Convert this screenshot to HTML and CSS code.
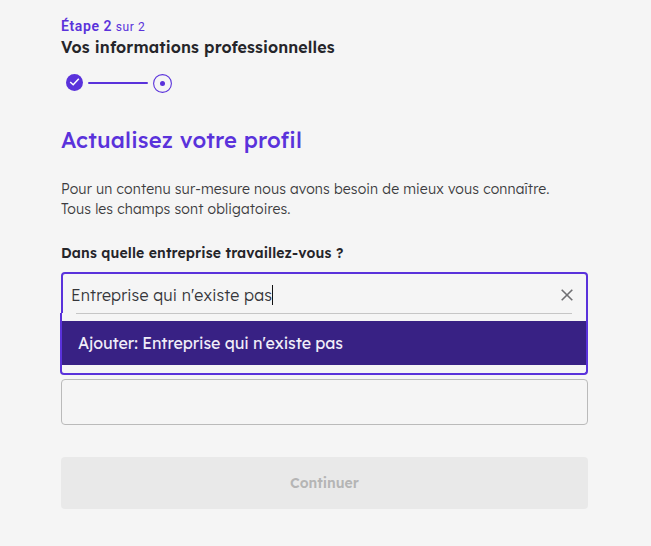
FILE: index.html
```html
<!DOCTYPE html>
<html lang="fr">

<head>
    <meta charset="UTF-8">
    <meta name="viewport" content="width=device-width, initial-scale=1.0">
    <title>Actualisez votre profil</title>
    <link rel="stylesheet" href="styles.css">
</head>

<body>
    <div class="container">
        <p class="step"><strong>Étape 2</strong> <span>sur 2</span></p>
        <h2>Vos informations professionnelles</h2>

        <div class="stepper">
            <svg class="step-done" width="17" height="17" viewBox="0 0 17 17">
                <circle cx="8.5" cy="8.5" r="8.5" fill="#5a32db" />
                <path d="M4.2 8 L7.2 10.7 L12.8 4.8" fill="none" stroke="#fff" stroke-width="1.5" />
            </svg>
            <div class="step-line"></div>
            <svg class="step-current" width="19" height="19" viewBox="0 0 19 19">
                <circle cx="9.5" cy="9.5" r="8.9" fill="none" stroke="#5a32db" stroke-width="1.1" />
                <circle cx="9.5" cy="9.5" r="2.5" fill="#5a32db" />
            </svg>
        </div>

        <h1>Actualisez votre profil</h1>

        <p class="intro">
            Pour un contenu sur-mesure nous avons besoin de mieux vous connaître.<br>
            Tous les champs sont obligatoires.
        </p>

        <div class="label">Dans quelle entreprise travaillez-vous ?</div>
        <div class="autocomplete">
            <div class="search-field">
                <span class="search-value">Entreprise qui n'existe pas</span>
                <span class="caret"></span>
                <svg class="clear" width="12" height="12" viewBox="0 0 12 12">
                    <path d="M.7 .7 L11.3 11.3 M11.3 .7 L.7 11.3" fill="none" stroke="#6f6f72" stroke-width="1.6" />
                </svg>
            </div>
            <div class="suggestions">
                <div class="separator"></div>
                <div class="suggestion">Ajouter: Entreprise qui n'existe pas</div>
            </div>
        </div>

        <div class="field"></div>

        <div class="submit">Continuer</div>
    </div>
</body>

</html>
```
FILE: styles.css
```css
* {
    margin: 0;
    padding: 0;
    box-sizing: border-box;
}

body {
    background-color: #f5f5f5;
    font-family: Lexend, Inter, sans-serif;
    color: #25252a;
}

.container {
    width: 527px;
    margin-left: 61px;
    padding-top: 16px;
    white-space: nowrap;
}

.step {
    font-family: Roboto, sans-serif;
    font-size: 14px;
    line-height: 20px;
    color: #5a32db;
}

.step strong {
    font-weight: 600;
    letter-spacing: 0.6px;
}

.step span {
    font-size: 12px;
    letter-spacing: 0.6px;
}

h2 {
    font-size: 16px;
    font-weight: 600;
    line-height: 20px;
    letter-spacing: 0.13px;
}

.stepper {
    display: flex;
    align-items: flex-start;
    gap: 5px;
    padding: 17px 0 0 5px;
    height: 36px;
}

.step-line {
    width: 60px;
    height: 2px;
    margin-top: 8px;
    border-radius: 1px;
    background-color: #5a32db;
}

h1 {
    margin-top: 32px;
    font-size: 22px;
    font-weight: 500;
    line-height: 30px;
    letter-spacing: 0.19px;
    color: #5a32db;
}

.intro {
    margin-top: 24px;
    font-size: 14px;
    font-weight: 300;
    line-height: 20px;
    letter-spacing: 0.14px;
    color: #3c3c40;
}

.label {
    margin-top: 24px;
    font-size: 14px;
    font-weight: 600;
    line-height: 20px;
    letter-spacing: 0.13px;
}

.autocomplete {
    position: relative;
    margin-top: 9px;
}

.search-field {
    display: flex;
    align-items: center;
    height: 46px;
    padding: 0 13px 0 8px;
    border: 2px solid #5a32db;
    border-radius: 4px;
    font-size: 16px;
    font-weight: 300;
    letter-spacing: 0.15px;
}

.search-value {
    color: #36363a;
}

.caret {
    width: 1px;
    height: 20px;
    background-color: #111;
}

.clear {
    margin-left: auto;
}

/* opened list covers the bottom of the field */
.suggestions {
    position: absolute;
    top: 41px;
    left: -1px;
    right: 0;
    height: 62px;
    border: 2px solid #5a32db;
    border-top: none;
    border-radius: 0 0 4px 4px;
    background-color: #f5f5f5;
}

.separator {
    height: 1px;
    margin: 0 14px 7px;
    background-color: #c6c6c6;
}

.suggestion {
    height: 44px;
    padding-left: 16px;
    background-color: #382184;
    color: #f0edf8;
    font-size: 16px;
    line-height: 44px;
    letter-spacing: -0.09px;
}

.field {
    height: 46px;
    margin-top: 61px;
    border: 1px solid #bababa;
    border-radius: 4px;
}

.submit {
    height: 52px;
    margin-top: 32px;
    border-radius: 4px;
    background-color: #e9e9e9;
    color: #b5b5b5;
    font-size: 14px;
    font-weight: 600;
    line-height: 52px;
    text-align: center;
}
```
